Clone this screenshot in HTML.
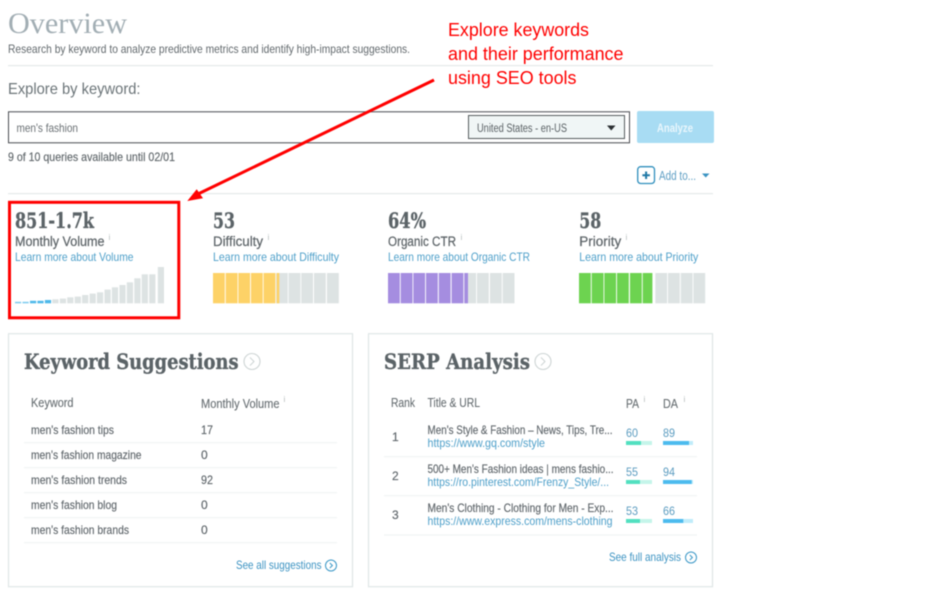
<!DOCTYPE html>
<html><head><meta charset="utf-8"><style>
html,body{margin:0;padding:0;background:#fff;width:926px;height:594px;overflow:hidden}
svg{display:block}
text{font-family:"Liberation Sans",sans-serif;font-size:12px;fill:#666d71}
.slab{font-family:"DejaVu Serif","Liberation Serif",serif;font-weight:700;fill:#5b6367;stroke:#5b6367;stroke-width:.35px}
.lab{font-size:13.5px;fill:#5f666a;stroke:#5f666a;stroke-width:.25px}
.lnk{fill:#4d9fc9;font-size:12px}
.m{fill:#5f666b;font-size:12px;stroke:#5f666b;stroke-width:.15px}
.hd{fill:#666d71;font-size:12.5px;stroke:#666d71;stroke-width:.1px}
.i{font-size:8px;fill:#b5bcbc}
.red{font-size:18px;fill:#f00}
.g{fill:#dde3e3}.o{fill:#fdd267}.p{fill:#a58de0}.gr{fill:#6dd350}
.ln{stroke:#f0f4f4;stroke-width:1.2}
.blur{filter:blur(.4px)}
</style></head><body>
<svg width="926" height="594" viewBox="0 0 926 594" xmlns="http://www.w3.org/2000/svg">
<g class="blur">
<text x="8" y="33" textLength="119" lengthAdjust="spacingAndGlyphs" style="font-family:'Liberation Serif',serif;font-size:30px;fill:#a2aeb4">Overview</text>
<text x="8" y="53" textLength="402" lengthAdjust="spacingAndGlyphs" style="font-size:12px;fill:#62696d">Research by keyword to analyze predictive metrics and identify high-impact suggestions.</text>
<rect x="8" y="65" width="705" height="1.2" fill="#e4e9e9"/>
<text x="8" y="94" textLength="132.500" lengthAdjust="spacingAndGlyphs" style="font-size:16px;fill:#6b7478">Explore by keyword:</text>

<rect x="8.500" y="111.800" width="621" height="31" fill="#fff" stroke="#4a4d52" stroke-width="1"/>
<text x="16.500" y="132" textLength="61.500" lengthAdjust="spacingAndGlyphs" style="font-size:12px;fill:#6a7074">men's fashion</text>
<rect x="468.500" y="115.500" width="156" height="23" fill="#f0f6f6" stroke="#565c5e" stroke-width="1"/>
<text x="477" y="132" textLength="90" lengthAdjust="spacingAndGlyphs" style="font-size:11.500px;fill:#5a6165">United States - en-US</text>
<path d="M607 125.500h8.500l-4.250 5z" fill="#2c3033"/>
<rect x="637" y="111" width="77" height="32" rx="2" fill="#a8dcf3"/>
<text x="657" y="132" textLength="36" lengthAdjust="spacingAndGlyphs" style="font-size:12px;font-weight:700;fill:#e9f6fc">Analyze</text>

<text x="8" y="161" textLength="167" lengthAdjust="spacingAndGlyphs" style="font-size:12px;fill:#5f666a;stroke:#5f666a;stroke-width:.15px">9 of 10 queries available until 02/01</text>
<rect x="637.700" y="166.700" width="16.800" height="16.800" rx="3" fill="#fff" stroke="#2f8fbd" stroke-width="1.300"/>
<path d="M646.100 171.500v7.500M642.400 175.250h7.500" stroke="#1f78a6" stroke-width="2" fill="none"/>
<text x="659" y="180" textLength="37" lengthAdjust="spacingAndGlyphs" style="font-size:12.500px;fill:#5f9fc4">Add to...</text>
<path d="M702 173.500h7.500l-3.750 4z" fill="#3a93c2"/>
<rect x="8" y="193" width="705" height="1.2" fill="#e4e9e9"/>

<!-- metric 1 -->
<text x="15" y="228" textLength="79" lengthAdjust="spacingAndGlyphs" class="slab" style="font-size:21px">851-1.7k</text>
<text x="15" y="246" textLength="89.500" lengthAdjust="spacingAndGlyphs" class="lab">Monthly Volume</text>
<text x="108.500" y="240" class="i">i</text>
<text x="15" y="261" textLength="118.500" lengthAdjust="spacingAndGlyphs" class="lnk">Learn more about Volume</text>
<g fill="#4db8ea">
<rect x="15" y="301.800" width="6.200" height="1.500" fill="#7bcbef"/><rect x="22.500" y="301.800" width="6.200" height="1.500" fill="#7bcbef"/><rect x="30" y="300.800" width="6.200" height="2.500"/><rect x="37.400" y="300.800" width="6.200" height="2.500"/><rect x="44.900" y="300" width="6.200" height="3.300"/>
</g>
<g class="g">
<rect x="52.300" y="299.300" width="6.200" height="4"/><rect x="59.800" y="298.600" width="6.200" height="4.700"/><rect x="67.200" y="297.300" width="6.200" height="6"/><rect x="74.700" y="296.600" width="6.200" height="6.700"/><rect x="82.100" y="295" width="6.200" height="8.300"/><rect x="89.600" y="293.600" width="6.200" height="9.700"/><rect x="97" y="292.300" width="6.200" height="11"/><rect x="104.500" y="289.600" width="6.200" height="13.700"/><rect x="111.900" y="287.300" width="6.200" height="16"/><rect x="119.400" y="285" width="6.200" height="18.300"/><rect x="126.800" y="282.300" width="6.200" height="21"/><rect x="134.300" y="278.300" width="6.200" height="25"/><rect x="141.700" y="274.300" width="6.200" height="29"/><rect x="150" y="274.300" width="6.200" height="29" style="display:none"/><rect x="149.200" y="274.300" width="6.200" height="29"/><rect x="157.800" y="267" width="6.200" height="36.300"/>
</g>
<rect x="9.500" y="202.300" width="169.300" height="115.500" fill="none" stroke="#f00" stroke-width="3"/>

<!-- metric 2 -->
<text x="213" y="228" textLength="22" lengthAdjust="spacingAndGlyphs" class="slab" style="font-size:21px">53</text>
<text x="213" y="246" textLength="50" lengthAdjust="spacingAndGlyphs" class="lab">Difficulty</text>
<text x="267.500" y="240" class="i">i</text>
<text x="213" y="261" textLength="126" lengthAdjust="spacingAndGlyphs" class="lnk">Learn more about Difficulty</text>
<g class="g"><rect x="276" y="273" width="11.800" height="30.300"/><rect x="288.600" y="273" width="11.800" height="30.300"/><rect x="301.200" y="273" width="11.800" height="30.300"/><rect x="314" y="273" width="11.800" height="30.300"/><rect x="327" y="273" width="11.800" height="30.300"/></g>
<g class="o"><rect x="213" y="273" width="11.800" height="30.300"/><rect x="225.700" y="273" width="11.800" height="30.300"/><rect x="238.300" y="273" width="11.800" height="30.300"/><rect x="251" y="273" width="11.800" height="30.300"/><rect x="263.600" y="273" width="11.800" height="30.300"/><rect x="276.700" y="273" width="2.600" height="30.300"/></g>

<!-- metric 3 -->
<text x="388" y="228" textLength="38" lengthAdjust="spacingAndGlyphs" class="slab" style="font-size:21px">64%</text>
<text x="388" y="246" textLength="68" lengthAdjust="spacingAndGlyphs" class="lab">Organic CTR</text>
<text x="460.500" y="240" class="i">i</text>
<text x="388" y="261" textLength="142" lengthAdjust="spacingAndGlyphs" class="lnk">Learn more about Organic CTR</text>
<g class="g"><rect x="464.300" y="273" width="11.800" height="30.300"/><rect x="477" y="273" width="11.800" height="30.300"/><rect x="490" y="273" width="11.800" height="30.300"/><rect x="502.700" y="273" width="11.800" height="30.300"/></g>
<g class="p"><rect x="388" y="273" width="11.800" height="30.300"/><rect x="400.700" y="273" width="11.800" height="30.300"/><rect x="413.300" y="273" width="11.800" height="30.300"/><rect x="426" y="273" width="11.800" height="30.300"/><rect x="438.800" y="273" width="11.800" height="30.300"/><rect x="451.600" y="273" width="11.800" height="30.300"/><rect x="464.300" y="273" width="3.700" height="30.300"/></g>

<!-- metric 4 -->
<text x="579.300" y="228" textLength="22" lengthAdjust="spacingAndGlyphs" class="slab" style="font-size:21px">58</text>
<text x="579.300" y="246" textLength="42" lengthAdjust="spacingAndGlyphs" class="lab">Priority</text>
<text x="625.500" y="240" class="i">i</text>
<text x="579.300" y="261" textLength="119" lengthAdjust="spacingAndGlyphs" class="lnk">Learn more about Priority</text>
<g class="g"><rect x="655.300" y="273" width="11.800" height="30.300"/><rect x="668" y="273" width="11.800" height="30.300"/><rect x="680.800" y="273" width="11.800" height="30.300"/><rect x="693.400" y="273" width="11.800" height="30.300"/></g>
<g class="gr"><rect x="579" y="273" width="11.800" height="30.300"/><rect x="591.700" y="273" width="11.800" height="30.300"/><rect x="604.300" y="273" width="11.800" height="30.300"/><rect x="617" y="273" width="11.800" height="30.300"/><rect x="630" y="273" width="11.800" height="30.300"/><rect x="642.700" y="273" width="9.700" height="30.300"/></g>

<!-- left panel -->
<rect x="8.500" y="333.700" width="344" height="253" fill="#fff" stroke="#dfe6e6" stroke-width="1.200"/>
<text x="24" y="369" textLength="214.500" lengthAdjust="spacingAndGlyphs" class="slab" style="font-size:21px">Keyword Suggestions</text>
<circle cx="252" cy="361.500" r="8" fill="none" stroke="#cdd4d4" stroke-width="1.100"/>
<path d="M250 357.500l4 4-4 4" fill="none" stroke="#cdd4d4" stroke-width="1"/>
<text x="31" y="407" textLength="42.500" lengthAdjust="spacingAndGlyphs" class="hd">Keyword</text>
<text x="201" y="408" textLength="78.500" lengthAdjust="spacingAndGlyphs" class="hd">Monthly Volume</text>
<text x="283.500" y="402" class="i">i</text>
<text x="31" y="434" textLength="83" lengthAdjust="spacingAndGlyphs" class="m">men's fashion tips</text><text x="201" y="434" textLength="12" lengthAdjust="spacingAndGlyphs" class="m">17</text>
<text x="31" y="459" textLength="110.500" lengthAdjust="spacingAndGlyphs" class="m">men's fashion magazine</text><text x="201" y="459" class="m">0</text>
<text x="31" y="484" textLength="96" lengthAdjust="spacingAndGlyphs" class="m">men's fashion trends</text><text x="201" y="484" textLength="12" lengthAdjust="spacingAndGlyphs" class="m">92</text>
<text x="31" y="509" textLength="86" lengthAdjust="spacingAndGlyphs" class="m">men's fashion blog</text><text x="201" y="509" class="m">0</text>
<text x="31" y="534" textLength="98" lengthAdjust="spacingAndGlyphs" class="m">men's fashion brands</text><text x="201" y="534" class="m">0</text>
<path class="ln" d="M24 442.700H337M24 467.700H337M24 492.700H337M24 517.700H337M24 542.700H337"/>
<text x="236" y="569" textLength="85.500" lengthAdjust="spacingAndGlyphs" class="lnk" style="fill:#3c93c2">See all suggestions</text>
<circle cx="331" cy="565.500" r="5.500" fill="none" stroke="#3a97c6" stroke-width="1"/>
<path d="M329.800 563l2.600 2.500-2.600 2.500" fill="none" stroke="#3a97c6" stroke-width="1"/>

<!-- right panel -->
<rect x="368.500" y="333.700" width="344" height="253" fill="#fff" stroke="#dfe6e6" stroke-width="1.200"/>
<text x="384" y="369" textLength="146" lengthAdjust="spacingAndGlyphs" class="slab" style="font-size:21px">SERP Analysis</text>
<circle cx="543" cy="361.500" r="8" fill="none" stroke="#cdd4d4" stroke-width="1.100"/>
<path d="M541 357.500l4 4-4 4" fill="none" stroke="#cdd4d4" stroke-width="1"/>
<text x="391" y="407" textLength="24" lengthAdjust="spacingAndGlyphs" class="hd">Rank</text>
<text x="427.500" y="407" textLength="52.500" lengthAdjust="spacingAndGlyphs" class="hd">Title &amp; URL</text>
<text x="626" y="408" textLength="13" lengthAdjust="spacingAndGlyphs" class="hd">PA</text><text x="643.500" y="402" class="i">i</text>
<text x="663" y="408" textLength="15" lengthAdjust="spacingAndGlyphs" class="hd">DA</text><text x="683.500" y="402" class="i">i</text>

<text x="392" y="441" class="m">1</text>
<text x="427.500" y="434" textLength="185" lengthAdjust="spacingAndGlyphs" class="m">Men's Style &amp; Fashion – News, Tips, Tre...</text>
<text x="427.500" y="447" textLength="117.500" lengthAdjust="spacingAndGlyphs" class="lnk">https://www.gq.com/style</text>
<text x="626" y="437" textLength="12" lengthAdjust="spacingAndGlyphs" class="lnk" style="fill:#5b9cc0">60</text>
<text x="663" y="437" textLength="12" lengthAdjust="spacingAndGlyphs" class="lnk" style="fill:#5b9cc0">89</text>
<rect x="626" y="441" width="26" height="4" fill="#c5f5ea"/><rect x="626" y="441" width="15" height="4" fill="#52e0c0"/>
<rect x="663" y="441" width="30" height="4" fill="#c0ecfa"/><rect x="663" y="441" width="26" height="4" fill="#4dbbee"/>

<text x="392" y="480" class="m">2</text>
<text x="427.500" y="473" textLength="186" lengthAdjust="spacingAndGlyphs" class="m">500+ Men's Fashion ideas | mens fashio...</text>
<text x="427.500" y="486" textLength="181.500" lengthAdjust="spacingAndGlyphs" class="lnk">https://ro.pinterest.com/Frenzy_Style/...</text>
<text x="626" y="476" textLength="12" lengthAdjust="spacingAndGlyphs" class="lnk" style="fill:#5b9cc0">55</text>
<text x="663" y="476" textLength="12" lengthAdjust="spacingAndGlyphs" class="lnk" style="fill:#5b9cc0">94</text>
<rect x="626" y="480" width="26" height="4" fill="#c5f5ea"/><rect x="626" y="480" width="14" height="4" fill="#52e0c0"/>
<rect x="663" y="480" width="30" height="4" fill="#c0ecfa"/><rect x="663" y="480" width="28.700" height="4" fill="#4dbbee"/>

<text x="392" y="519" class="m">3</text>
<text x="427.500" y="512" textLength="186" lengthAdjust="spacingAndGlyphs" class="m">Men's Clothing - Clothing for Men - Exp...</text>
<text x="427.500" y="525" textLength="185" lengthAdjust="spacingAndGlyphs" class="lnk">https://www.express.com/mens-clothing</text>
<text x="626" y="515" textLength="12" lengthAdjust="spacingAndGlyphs" class="lnk" style="fill:#5b9cc0">53</text>
<text x="663" y="515" textLength="12" lengthAdjust="spacingAndGlyphs" class="lnk" style="fill:#5b9cc0">66</text>
<rect x="626" y="519" width="26" height="4" fill="#c5f5ea"/><rect x="626" y="519" width="14" height="4" fill="#52e0c0"/>
<rect x="663" y="519" width="30" height="4" fill="#c0ecfa"/><rect x="663" y="519" width="20.300" height="4" fill="#4dbbee"/>

<path class="ln" d="M384 456.700H697M384 495.700H697M384 535H697"/>
<text x="609" y="561" textLength="72" lengthAdjust="spacingAndGlyphs" class="lnk" style="fill:#3c93c2">See full analysis</text>
<circle cx="691" cy="557.500" r="5.500" fill="none" stroke="#3a97c6" stroke-width="1"/>
<path d="M689.800 555l2.600 2.500-2.600 2.500" fill="none" stroke="#3a97c6" stroke-width="1"/>

<!-- annotation -->
<text x="448" y="36" textLength="141" lengthAdjust="spacingAndGlyphs" class="red">Explore keywords</text>
<text x="448" y="60" textLength="175.500" lengthAdjust="spacingAndGlyphs" class="red">and their performance</text>
<text x="448" y="84" textLength="128.500" lengthAdjust="spacingAndGlyphs" class="red">using SEO tools</text>
<path d="M434 80L199 193.500" stroke="#f00" stroke-width="3" fill="none"/>
<path d="M187.300 201L196.700 189.300L203 198.300Z" fill="#f00"/>
</g>
</svg>
</body></html>
